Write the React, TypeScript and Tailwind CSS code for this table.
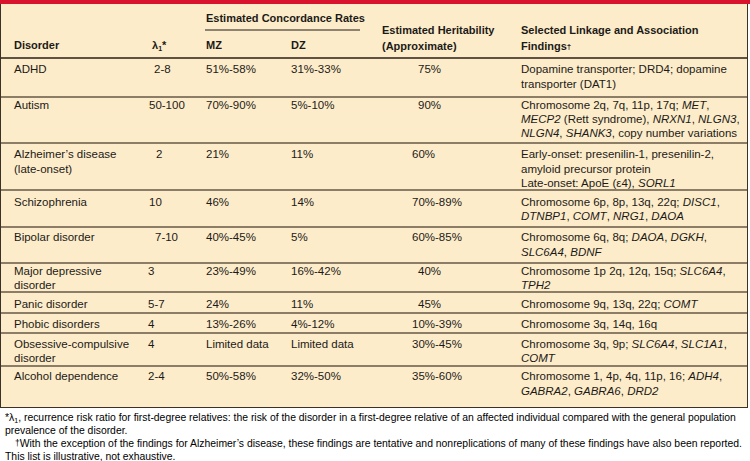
import React from "react";

type Row = {
  d: React.ReactNode;
  lam: string;
  lamCls: string;
  mz: string;
  dz: string;
  her: string;
  herCls: string;
  f: React.ReactNode;
  rowCls: string;
};

const I = ({ children }: { children: React.ReactNode }) => <i>{children}</i>;

const rows: Row[] = [
  {
    d: <>ADHD</>,
    lam: "2-8",
    lamCls: "pl-[6px]",
    mz: "51%-58%",
    dz: "31%-33%",
    her: "75%",
    herCls: "pl-[36px]",
    f: (
      <>
        Dopamine transporter; DRD4; dopamine
        <br />
        transporter (DAT1)
      </>
    ),
    rowCls: "h-[39px] pt-[3px] leading-[15px] border-b-2",
  },
  {
    d: <>Autism</>,
    lam: "50-100",
    lamCls: "pl-[1px]",
    mz: "70%-90%",
    dz: "5%-10%",
    her: "90%",
    herCls: "pl-[36px]",
    f: (
      <>
        Chromosome 2q, 7q, 11p, 17q; <I>MET</I>,
        <br />
        <I>MECP2</I> (Rett syndrome), <I>NRXN1</I>, <I>NLGN3</I>,
        <br />
        <I>NLGN4</I>, <I>SHANK3</I>, copy number variations
      </>
    ),
    rowCls: "h-[46px] pt-[0px] leading-[14px] border-b-2",
  },
  {
    d: (
      <>
        Alzheimer’s disease
        <br />
        (late-onset)
      </>
    ),
    lam: "2",
    lamCls: "pl-[8px]",
    mz: "21%",
    dz: "11%",
    her: "60%",
    herCls: "pl-[30px]",
    f: (
      <>
        Early-onset: presenilin-1, presenilin-2,
        <br />
        amyloid precursor protein
        <br />
        Late-onset: ApoE (ε4), <I>SORL1</I>
      </>
    ),
    rowCls: "h-[47px] pt-[3px] leading-[14.5px] border-b-2",
  },
  {
    d: <>Schizophrenia</>,
    lam: "10",
    lamCls: "pl-[1px]",
    mz: "46%",
    dz: "14%",
    her: "70%-89%",
    herCls: "pl-[30px]",
    f: (
      <>
        Chromosome 6p, 8p, 13q, 22q; <I>DISC1</I>,
        <br />
        <I>DTNBP1</I>, <I>COMT</I>, <I>NRG1</I>, <I>DAOA</I>
      </>
    ),
    rowCls: "h-[37px] pt-[4px] leading-[14px] border-b-2",
  },
  {
    d: <>Bipolar disorder</>,
    lam: "7-10",
    lamCls: "pl-[7px]",
    mz: "40%-45%",
    dz: "5%",
    her: "60%-85%",
    herCls: "pl-[30px]",
    f: (
      <>
        Chromosome 6q, 8q; <I>DAOA</I>, <I>DGKH</I>,
        <br />
        <I>SLC6A4</I>, <I>BDNF</I>
      </>
    ),
    rowCls: "h-[36px] pt-[2px] leading-[15px] border-b-2",
  },
  {
    d: (
      <>
        Major depressive
        <br />
        disorder
      </>
    ),
    lam: "3",
    lamCls: "pl-0",
    mz: "23%-49%",
    dz: "16%-42%",
    her: "40%",
    herCls: "pl-[36px]",
    f: (
      <>
        Chromosome 1p 2q, 12q, 15q; <I>SLC6A4</I>,
        <br />
        <I>TPH2</I>
      </>
    ),
    rowCls: "h-[29px] pt-[1px] leading-[13.5px] border-b-2",
  },
  {
    d: <>Panic disorder</>,
    lam: "5-7",
    lamCls: "pl-0",
    mz: "24%",
    dz: "11%",
    her: "45%",
    herCls: "pl-[36px]",
    f: (
      <>
        Chromosome 9q, 13q, 22q; <I>COMT</I>
      </>
    ),
    rowCls: "h-[21px] pt-[4px] leading-[14px] border-b-2",
  },
  {
    d: <>Phobic disorders</>,
    lam: "4",
    lamCls: "pl-0",
    mz: "13%-26%",
    dz: "4%-12%",
    her: "10%-39%",
    herCls: "pl-[30px]",
    f: <>Chromosome 3q, 14q, 16q</>,
    rowCls: "h-[20px] pt-[3px] leading-[14px] border-b-2",
  },
  {
    d: (
      <>
        Obsessive-compulsive
        <br />
        disorder
      </>
    ),
    lam: "4",
    lamCls: "pl-0",
    mz: "Limited data",
    dz: "Limited data",
    her: "30%-45%",
    herCls: "pl-[30px]",
    f: (
      <>
        Chromosome 3q, 9p; <I>SLC6A4</I>, <I>SLC1A1</I>,
        <br />
        <I>COMT</I>
      </>
    ),
    rowCls: "h-[33px] pt-[3px] leading-[14px] border-b-2",
  },
  {
    d: <>Alcohol dependence</>,
    lam: "2-4",
    lamCls: "pl-0",
    mz: "50%-58%",
    dz: "32%-50%",
    her: "35%-60%",
    herCls: "pl-[30px]",
    f: (
      <>
        Chromosome 1, 4p, 4q, 11p, 16; <I>ADH4</I>,
        <br />
        <I>GABRA2</I>, <I>GABRA6</I>, <I>DRD2</I>
      </>
    ),
    rowCls: "h-[40px] pt-[2px] leading-[15px]",
  },
];

const GRID = "grid grid-cols-[147px_58px_85px_91px_139px_1fr]";

export default function App() {
  return (
    <div className="w-[750px] h-[461px] overflow-hidden bg-white text-[#1c1a18] font-['Liberation_Sans',Arial,sans-serif]">
      <div className="h-[4px] bg-[#d9122e]" />
      <div className="w-[748px] bg-[#fdecc9] border-l border-r border-b border-[#3a3128]">
        {/* header */}
        <div className={`${GRID} h-[55px] border-b-2 border-[#5f5242] text-[11px] font-bold leading-[16px]`}>
          <div className="flex items-end pl-[13px] pb-[4px]">Disorder</div>
          <div className="flex items-end pl-[4px] pb-[4px]">
            <span>
              λ<sub className="text-[7px] align-baseline relative top-[2px]">1</sub>*
            </span>
          </div>
          <div className="col-span-2 flex flex-col pt-[6px] pb-[4px]">
            <div className="whitespace-nowrap">Estimated Concordance Rates</div>
            <div className="mt-[3px] h-[2px] w-[155px] -ml-[1px] bg-[#8e8270]" />
            <div className="mt-[6px] grid grid-cols-[85px_91px]">
              <div>MZ</div>
              <div>DZ</div>
            </div>
          </div>
          <div className="flex items-end pb-[3px]">
            <div>
              Estimated Heritability
              <br />
              (Approximate)
            </div>
          </div>
          <div className="flex items-end pb-[3px]">
            <div>
              Selected Linkage and Association
              <br />
              Findings<sup className="text-[8px] relative -top-[1px]">†</sup>
            </div>
          </div>
        </div>
        {/* body */}
        <div className="text-[11.5px]">
          {rows.map((r, i) => (
            <div key={i} className={`${GRID} ${r.rowCls} border-[#8b7d66] whitespace-nowrap`}>
              <div className="pl-[13px]">{r.d}</div>
              <div className={r.lamCls}>{r.lam}</div>
              <div>{r.mz}</div>
              <div>{r.dz}</div>
              <div className={r.herCls}>{r.her}</div>
              <div>{r.f}</div>
            </div>
          ))}
        </div>
      </div>
      {/* footnotes */}
      <div className="pl-[5px] pt-[3px] text-[10.4px] leading-[13px] text-black whitespace-nowrap">
        <div>
          *λ<sub className="text-[7px] align-baseline relative top-[2px]">1</sub>, recurrence risk ratio for
          first-degree relatives: the risk of the disorder in a first-degree relative of an affected individual
          compared with the general population
          <br />
          prevalence of the disorder.
        </div>
        <div>
          <span className="pl-[10px]">
            <sup className="text-[8.5px] relative -top-[1px]">†</sup>With the exception of the findings for
            Alzheimer’s disease, these findings are tentative and nonreplications of many of these findings have
            also been reported.
          </span>
          <br />
          This list is illustrative, not exhaustive.
        </div>
      </div>
    </div>
  );
}
